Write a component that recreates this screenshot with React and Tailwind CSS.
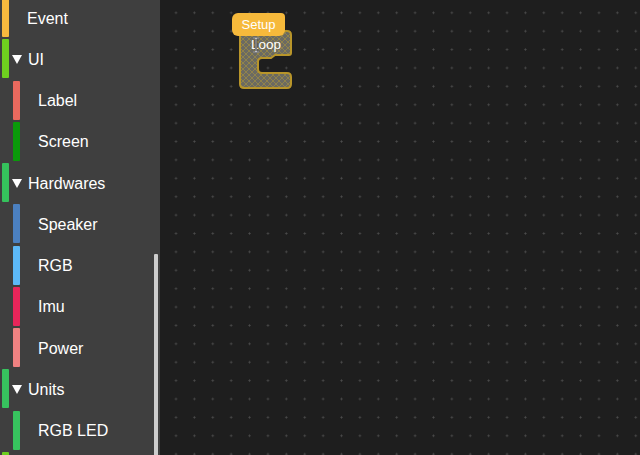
const items = [
  { label: 'Event', color: 'bg-[#f7b93e]', level: 0 },
  { label: 'UI', color: 'bg-[#6fcf1f]', level: 0, open: true },
  { label: 'Label', color: 'bg-[#e9695e]', level: 1 },
  { label: 'Screen', color: 'bg-[#0a9a0a]', level: 1 },
  { label: 'Hardwares', color: 'bg-[#35c25c]', level: 0, open: true },
  { label: 'Speaker', color: 'bg-[#4b80c0]', level: 1 },
  { label: 'RGB', color: 'bg-[#5cb8f7]', level: 1 },
  { label: 'Imu', color: 'bg-[#e8255a]', level: 1 },
  { label: 'Power', color: 'bg-[#f08282]', level: 1 },
  { label: 'Units', color: 'bg-[#37c35e]', level: 0, open: true },
  { label: 'RGB LED', color: 'bg-[#37c35e]', level: 1 },
  { label: '', color: 'bg-[#6dce1f]', level: 0 },
];

function Row({ item }) {
  const sub = item.level === 1;
  return (
    <div className="flex h-[41.25px] shrink-0 items-start">
      <div className={`mt-[1px] h-[39px] w-[7px] rounded-[1px] ${item.color} ${sub ? 'ml-[13px]' : 'ml-[2px]'}`} />
      <div className="flex h-[41.25px] items-center pt-[2px]">
        {item.open && (
          <svg width="10" height="9" viewBox="0 0 10 9" className="ml-[3px]">
            <path d="M0 0 H10 L5 9 Z" fill="#fff" />
          </svg>
        )}
        <span className={`text-[16px] text-white ${sub ? 'ml-[18px]' : item.open ? 'ml-[6px]' : 'ml-[18px]'}`}>
          {item.label}
        </span>
      </div>
    </div>
  );
}

function LoopBlock() {
  return (
    <svg className="absolute left-[68px] top-[8px]" width="70" height="85" viewBox="228 8 70 85">
      <defs>
        <pattern id="hatch" width="6" height="6" patternUnits="userSpaceOnUse">
          <rect width="6" height="6" fill="#6b6a62" />
          <path d="M0 0 L6 6 M6 0 L0 6" stroke="#a18e40" strokeWidth="0.7" />
        </pattern>
      </defs>
      <path
        d="M244 31 H287 Q291 31 291 35 V53 Q291 55 289 55 H280 L275 55 L271 58 H262 Q258 58 258 62 V69 Q258 73 262 73 H287 Q291 73 291 77 V84 Q291 88 287 88 H244 Q240 88 240 84 V35 Q240 31 244 31 Z"
        fill="url(#hatch)"
        stroke="#b8952a"
        strokeWidth="2"
      />
      <text x="251" y="49" fontSize="13.5" fill="#ffffff" fontFamily="Liberation Sans, Arial, sans-serif">
        Loop
      </text>
    </svg>
  );
}

export default function App() {
  return (
    <div className="flex h-[455px] w-[640px] overflow-hidden font-['Liberation_Sans',Arial,sans-serif]">
      <div className="relative w-[160px] shrink-0 overflow-hidden bg-[#3f3f3f]">
        <div className="-mt-[3px] flex flex-col">
          {items.map((item, i) => (
            <Row key={i} item={item} />
          ))}
        </div>
        <div className="absolute right-[2px] top-[254px] h-[210px] w-[4px] rounded-t-[1px] bg-[#cdcdcd]" />
      </div>
      <div className="relative flex-1 bg-[#1e1e1e] bg-[radial-gradient(circle,#4c4c4c_0.9px,transparent_1.1px)] bg-[size:18.4px_18.4px] bg-[position:6.8px_3.6px]">
        <LoopBlock />
        <div className="absolute left-[72px] top-[13px] flex h-[23px] w-[53px] items-center justify-center rounded-[6px] rounded-tr-[4px] bg-[#f6b93b] text-[13px] text-white">
          Setup
        </div>
        <svg className="absolute left-[92px] top-[37px]" width="8" height="16" viewBox="0 0 8 16">
          <path d="M1 1 H7 M4 1 V15 M1 15 H7" stroke="#000" strokeWidth="2.2" />
          <path d="M1 1 H7 M4 1 V15 M1 15 H7" stroke="#fff" strokeWidth="1" />
        </svg>
      </div>
    </div>
  );
}
